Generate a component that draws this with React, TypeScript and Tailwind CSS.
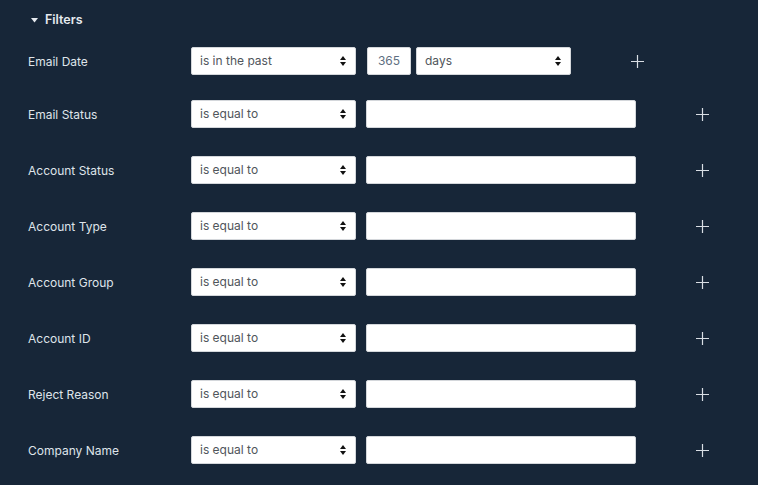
import React from "react";

const rows = [
  "Email Status",
  "Account Status",
  "Account Type",
  "Account Group",
  "Account ID",
  "Reject Reason",
  "Company Name",
];

const SortArrows = () => (
  <svg width="6" height="10" viewBox="0 0 6 10" aria-hidden="true">
    <path d="M3 0 L6 4 L0 4 Z" fill="#111" />
    <path d="M3 10 L6 6 L0 6 Z" fill="#111" />
  </svg>
);

const Plus = () => (
  <svg width="13" height="13" viewBox="0 0 13 13" aria-hidden="true">
    <path d="M6.5 0 V13 M0 6.5 H13" stroke="#d9dee4" strokeWidth="1.2" />
  </svg>
);

const Select = ({ value, width }: { value: string; width: string }) => (
  <div
    className={`${width} h-[28px] flex items-center justify-between bg-white border border-[#d4d7db] rounded-[2px] pl-[8px] pr-[9px] text-[12px] text-[#50555b]`}
  >
    <span>{value}</span>
    <SortArrows />
  </div>
);

export default function App() {
  return (
    <div
      className="w-[758px] h-[485px] bg-[#172638] px-[28px] overflow-hidden"
      style={{ fontFamily: "Inter, 'Noto Sans', sans-serif" }}
    >
      <div className="flex items-center h-5 mt-[10px] gap-[7px] pl-[3px]">
        <svg width="7" height="5" viewBox="0 0 7 5" aria-hidden="true">
          <path d="M0 0 H7 L3.5 4.5 Z" fill="#e6eaef" />
        </svg>
        <span className="text-[12.5px] font-semibold text-[#e6eaef]">Filters</span>
      </div>

      <div className="mt-[17px] flex flex-col">
        <div className="flex items-center h-[28px] mb-[25px]">
          <div className="w-[163px] pt-[2px] text-[12px] text-[#dfe4ea]">Email Date</div>
          <Select value="is in the past" width="w-[165px]" />
          <div className="ml-[11px] w-[44px] h-[28px] bg-white border border-[#d4d7db] rounded-[2px] flex items-center justify-center text-[12px] text-[#5f6f82]">
            365
          </div>
          <div className="ml-[5px]">
            <Select value="days" width="w-[155px]" />
          </div>
          <div className="ml-[60px] flex items-center">
            <Plus />
          </div>
        </div>

        <div className="flex flex-col gap-[28px]">
          {rows.map((label) => (
            <div key={label} className="flex items-center h-[28px]">
              <div className="w-[163px] pt-[2px] text-[12px] text-[#dfe4ea]">{label}</div>
              <Select value="is equal to" width="w-[165px]" />
              <div className="ml-[10px] w-[270px] h-[28px] bg-white border border-[#d4d7db] rounded-[2px]" />
              <div className="ml-[60px] flex items-center">
                <Plus />
              </div>
            </div>
          ))}
        </div>
      </div>
    </div>
  );
}
